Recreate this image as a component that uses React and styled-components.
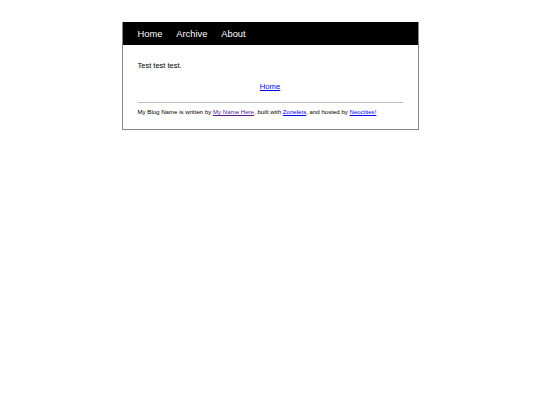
import styled, { createGlobalStyle } from "styled-components";

const Global = createGlobalStyle`
  body {
    margin: 0;
    background: #fff;
    font-family: "Liberation Sans", Arial, sans-serif;
  }
`;

const Page = styled.div`
  width: 295px;
  margin: 22px auto 0;
  border: 1px solid #888;
  border-top: none;
  background: #fff;
`;

const Nav = styled.nav`
  display: flex;
  align-items: center;
  gap: 14px;
  height: 23px;
  padding: 0 15px;
  background: #000;
`;

const NavItem = styled.a`
  color: #fff;
  font-size: 9.3px;
  text-decoration: none;
`;

const Content = styled.main`
  padding: 16px 15px 14px;
`;

const Text = styled.p`
  margin: 0 0 11px;
  font-size: 7.5px;
  line-height: 10px;
  color: #000;
`;

const Center = styled.div`
  text-align: center;
  font-size: 7.7px;
  line-height: 10px;
  margin-bottom: 10px;
`;

const Link = styled.a`
  color: ${(p) => (p.$visited ? "#551a8b" : "#0000ee")};
  text-decoration: underline;
`;

const Rule = styled.hr`
  border: none;
  border-top: 1px solid #bbb;
  margin: 0 0 5px;
`;

const Footer = styled.footer`
  font-size: 6.1px;
  color: #000;
`;

export default function App() {
  return (
    <>
      <Global />
      <Page>
        <Nav>
          <NavItem href="#">Home</NavItem>
          <NavItem href="#">Archive</NavItem>
          <NavItem href="#">About</NavItem>
        </Nav>
        <Content>
          <Text>Test test test.</Text>
          <Center>
            <Link href="#">Home</Link>
          </Center>
          <Rule />
          <Footer>
            My Blog Name is written by <Link $visited href="#">My Name Here</Link>, built with{" "}
            <Link href="#">Zonelets</Link>, and hosted by <Link href="#">Neocities!</Link>
          </Footer>
        </Content>
      </Page>
    </>
  );
}
